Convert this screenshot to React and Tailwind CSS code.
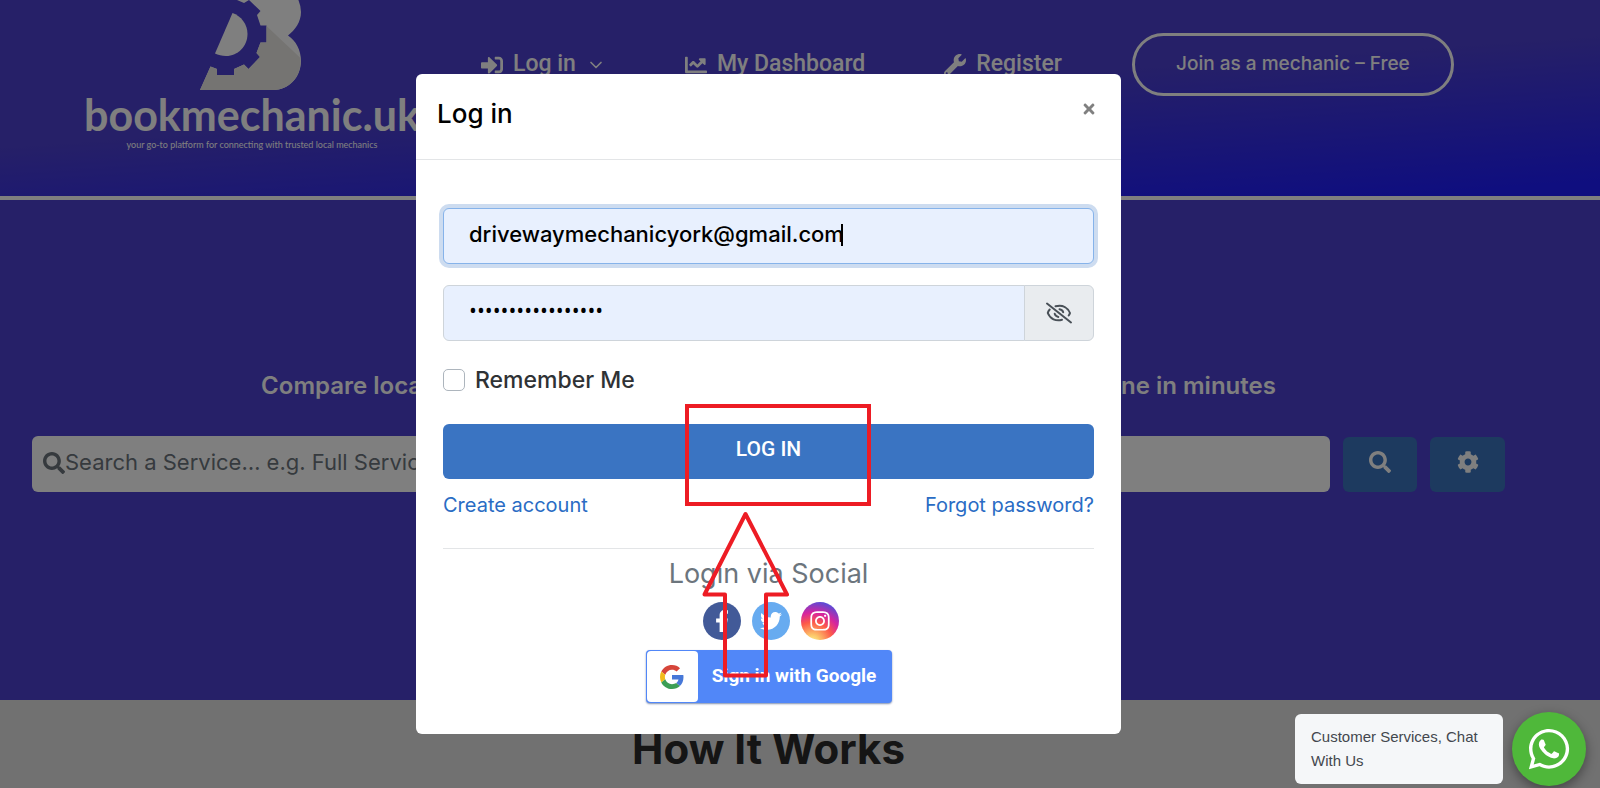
import React from "react";
import { FaSignInAlt, FaChartLine, FaWrench, FaSearch, FaCog, FaWhatsapp, FaFacebookF, FaTwitter, FaInstagram, FaTimes } from "react-icons/fa";
import { FiChevronDown } from "react-icons/fi";

function LogoMark() {
  return (
    <svg viewBox="0 0 110 92" className="block h-[92px] w-[110px]" aria-hidden="true">
      <path fill="#fff" d="M42 -10H96Q104 2 104 12C104 22 98 30 91 35.500C99 41 104 50 104 61C104 77 92 90 76 90H3L13.500 66.500L20 69V75H37V69L47 64.500L51.500 69L63 57L59.500 53L63.500 42.500H69.500V25.500H63.500L60 15L63.500 11L52 0L47 3L40 0Z" />
      <path fill="#ebe9e5" d="M69.500 26L103.500 58V61C104 77 92 90 76 90H3L13.500 66.500L20 69V75H37V69L47 64.500L51.500 69L63 57L59.500 53L63.500 42.500H69.500Z" />
      <path fill="#fff" d="M35.500 13C44 16 50.500 24 50.500 34C50.500 46 41 56 29 56C25 56 21 55 18 53.500Z" />
    </svg>
  );
}

function EyeOff() {
  return (
    <svg viewBox="0 0 28 22" className="h-[22px] w-7" fill="none" stroke="#495057" strokeWidth="2" strokeLinecap="round" aria-hidden="true">
      <path d="M2 1.500L26 20.500" />
      <path d="M10.500 4.300C18 2.300 23 6 25 11C24.700 12 24.300 12.700 23.700 13.500" />
      <path d="M4.700 7.500C3.700 8.600 3 9.800 2.800 11C5 17 11 19.500 17 17.800" />
      <path d="M14.500 7.200C16.600 7.500 17.800 8.700 18.200 10.300M9.700 11.800C10.200 13.500 11.500 14.600 13.300 14.900" />
    </svg>
  );
}

function GoogleG() {
  return (
    <svg viewBox="0 0 48 48" className="size-6" aria-hidden="true">
      <path fill="#d6453a" d="M24 9.500c3.540 0 6.710 1.220 9.210 3.600l6.850-6.850C35.900 2.380 30.470 0 24 0 14.620 0 6.510 5.380 2.560 13.220l7.980 6.190C12.430 13.720 17.740 9.500 24 9.500z" />
      <path fill="#4778d8" d="M46.980 24.550c0-1.570-.15-3.090-.38-4.550H24v9.020h12.940c-.58 2.960-2.260 5.480-4.780 7.180l7.730 6c4.510-4.180 7.090-10.360 7.090-17.650z" />
      <path fill="#f2bb1b" d="M10.530 28.590c-.48-1.450-.76-2.990-.76-4.590s.27-3.140.76-4.590l-7.980-6.190C.92 16.460 0 20.120 0 24c0 3.880.92 7.540 2.560 10.780l7.970-6.190z" />
      <path fill="#3c9e55" d="M24 48c6.480 0 11.930-2.130 15.890-5.810l-7.730-6c-2.150 1.450-4.920 2.300-8.160 2.300-6.260 0-11.570-4.220-13.470-9.910l-7.980 6.190C6.510 42.620 14.620 48 24 48z" />
    </svg>
  );
}

function Header() {
  return (
    <header className="flex h-[200px] items-start overflow-hidden border-b-4 border-white bg-[linear-gradient(176deg,#4c40d0_48%,#1e1cff_96%)] pl-[82px] text-white">
      <div className="flex w-[340px] shrink-0 flex-col items-center">
        <LogoMark />
        <span className="pt-px font-[Lato,sans-serif] text-[43px] leading-[44px] font-bold">bookmechanic.uk</span>
        <span className="mt-0.5 font-[Lato,sans-serif] text-[9px] leading-3 whitespace-nowrap">your go-to platform for connecting with trusted local mechanics</span>
      </div>
      <nav className="ml-[59px] flex h-[129px] items-center gap-[79px] font-[Roboto,sans-serif] text-[23px] font-medium whitespace-nowrap">
        <a href="#login" className="flex items-center gap-[10px]">
          <FaSignInAlt className="size-[22px]" />
          Log in
          <FiChevronDown className="size-5" />
        </a>
        <a href="#dashboard" className="flex items-center gap-[10px]">
          <FaChartLine className="size-[22px]" />
          My Dashboard
        </a>
        <a href="#register" className="flex items-center gap-[10px]">
          <FaWrench className="size-[22px]" />
          Register
        </a>
      </nav>
      <a href="#join" className="mt-[33px] ml-[70px] flex h-[63px] w-[322px] shrink-0 items-center justify-center rounded-full border-[3px] border-white text-[19px] font-medium whitespace-nowrap">
        Join as a mechanic – Free
      </a>
    </header>
  );
}

function Hero() {
  return (
    <section className="h-[500px] bg-[#4c40d0] pt-[170px] pr-[95px] pl-8">
      <h2 className="text-center text-2xl leading-8 font-semibold whitespace-nowrap text-white">
        Compare local mechanics, read genuine reviews and book a car repair online in minutes
      </h2>
      <form className="mt-[34px] flex items-center gap-[13px]">
        <label className="flex h-14 flex-1 items-center rounded-md bg-white pb-[3px] pl-[11px] text-[#6c757d]">
          <FaSearch className="size-[22px] shrink-0" />
          <input type="text" aria-label="Search a service" placeholder="Search a Service… e.g. Full Service" className="min-w-0 flex-1 bg-transparent text-[22px] outline-none placeholder:text-[#6c757d]" />
        </label>
        <button type="button" aria-label="Search" className="flex h-[55px] w-[74px] items-center justify-center rounded-md bg-[#3a74be] pb-1 text-white">
          <FaSearch className="size-[22px]" />
        </button>
        <button type="button" aria-label="Settings" className="flex h-[55px] w-[75px] items-center justify-center rounded-md bg-[#3a74be] pb-1 text-white">
          <FaCog className="size-[22px]" />
        </button>
      </form>
    </section>
  );
}

function Annotations() {
  return (
    <svg viewBox="0 0 188 276" className="pointer-events-none absolute top-[329px] left-[268px] h-[276px] w-[188px]" fill="none" stroke="#ed1c24" strokeWidth="4" aria-hidden="true">
      <rect x="3" y="3" width="182" height="98" />
      <path strokeLinejoin="round" d="M61.500 111L103 191.500H82V272.500H41V191.500H20.500Z" />
    </svg>
  );
}

function LoginDialog() {
  return (
    <div role="dialog" aria-labelledby="login-title" className="relative w-[705px] rounded-md bg-white">
      <div className="flex h-[86px] items-start justify-between border-b border-[#e3e5e7] pr-6 pl-[21px]">
        <h1 id="login-title" className="pt-6 text-[26px] leading-8 font-medium text-black">Log in</h1>
        <button type="button" aria-label="Close" className="mt-[27px] text-[#808080]">
          <FaTimes className="size-4" />
        </button>
      </div>
      <form className="px-[27px] pt-12 pb-[31px]">
        <div className="relative">
          <input type="email" aria-label="Email" defaultValue="drivewaymechanicyork@gmail.com" className="block h-14 w-full rounded-md border border-[#86b3ea] bg-[#e8f0fe] px-[25px] pb-1 text-[22px] font-medium text-black caret-transparent ring-4 ring-[#cddcf0] outline-none" />
          <span className="absolute top-4 left-[398px] h-[22px] w-0.5 bg-black" />
        </div>
        <div className="mt-[21px] flex h-14">
          <input type="password" aria-label="Password" defaultValue="abcdefghijklmnopq" className="min-w-0 flex-1 rounded-l-md border border-[#ced4da] bg-[#e8f0fe] px-[25px] pb-1 font-['Open_Sans',sans-serif] text-[21px] text-black outline-none" />
          <button type="button" aria-label="Show password" className="-ml-px flex w-[70px] items-center justify-center rounded-r-md border border-[#ced4da] bg-[#e9ecef]">
            <EyeOff />
          </button>
        </div>
        <label className="mt-[23px] flex items-center gap-[10px] text-[23px] leading-8 font-medium text-[#2f3235]">
          <input type="checkbox" className="size-[22px] appearance-none rounded-[5px] border border-[#adb5bd] bg-white" />
          Remember Me
        </label>
        <button type="submit" className="mt-7 block h-[55px] w-full rounded-md bg-[#3a74c2] pb-1 font-[Roboto,sans-serif] text-[21px] font-medium text-white">
          LOG IN
        </button>
        <div className="mt-3 flex justify-between text-xl leading-7 text-[#2a6cc4]">
          <a href="#create">Create account</a>
          <a href="#forgot">Forgot password?</a>
        </div>
        <hr className="mt-[29px] border-[#e3e5e7]" />
        <h2 className="mt-[9px] text-center text-[27px] leading-8 text-[#6c757d]">Login via Social</h2>
        <div className="mt-3 flex justify-center gap-[11px] pl-1 text-white">
          <a href="#facebook" aria-label="Facebook" className="flex size-[38px] items-center justify-center rounded-full bg-[#425a98]">
            <FaFacebookF className="size-[22px]" />
          </a>
          <a href="#twitter" aria-label="Twitter" className="flex size-[38px] items-center justify-center rounded-full bg-[#67abf0]">
            <FaTwitter className="size-[22px]" />
          </a>
          <a href="#instagram" aria-label="Instagram" className="flex size-[38px] items-center justify-center rounded-full bg-[radial-gradient(circle_at_30%_107%,#fdf497_0%,#fcc96b_15%,#fd5949_42%,#d6249f_62%,#285aeb_95%)]">
            <FaInstagram className="size-[22px]" />
          </a>
        </div>
        <button type="button" className="mx-auto mt-[10px] flex h-[53px] w-[246px] items-stretch rounded-sm bg-[#5187f8] p-px text-white shadow-[0_1px_2px_#8090b0]">
          <span className="flex w-[51px] items-center justify-center rounded-sm bg-white">
            <GoogleG />
          </span>
          <span className="flex flex-1 items-center justify-center font-[Roboto,sans-serif] text-[19px] font-bold">Sign in with Google</span>
        </button>
      </form>
      <Annotations />
    </div>
  );
}

export default function App() {
  return (
    <div className="relative h-screen overflow-hidden font-[Inter,sans-serif]">
      <Header />
      <Hero />
      <section className="h-40 bg-[#e2e2e2] pt-[22px] pr-[63px]">
        <h2 className="text-center text-[42px] leading-[54px] font-bold text-[#2a2a2a]">How It Works</h2>
      </section>
      <div className="fixed inset-0 flex items-start justify-center overflow-hidden bg-black/50 pt-[74px] pr-[63px]">
        <LoginDialog />
      </div>
      <div className="fixed right-[14px] bottom-[2px] flex items-center gap-[9px]">
        <p className="flex h-[70px] w-[208px] items-center rounded-md bg-[#f5f7f9] px-4 font-['Liberation_Sans',sans-serif] text-[15px] leading-6 text-[#43474e]">
          Customer Services, Chat With Us
        </p>
        <button type="button" aria-label="Open chat" className="flex size-[74px] items-center justify-center rounded-full bg-[#4fb83a] text-white shadow-[0_4px_12px_rgba(0,0,0,0.4)]">
          <FaWhatsapp className="size-[46px]" />
        </button>
      </div>
    </div>
  );
}
